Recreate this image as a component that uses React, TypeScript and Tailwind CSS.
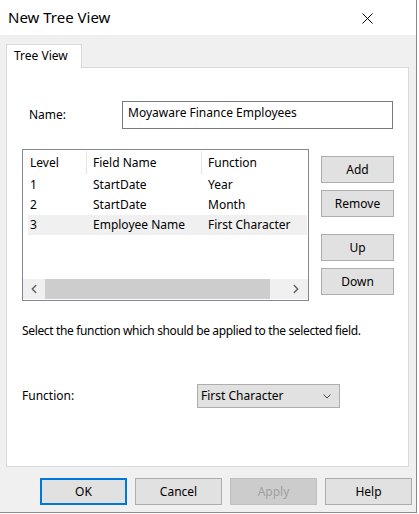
import { ChevronLeft, ChevronRight } from 'lucide-react';

const rows = [
    { level: '1', field: 'StartDate', fn: 'Year' },
    { level: '2', field: 'StartDate', fn: 'Month' },
    { level: '3', field: 'Employee Name', fn: 'First Character' },
];

const SELECTED = 2;

const SideButton = ({ label, className = '' }: { label: string; className?: string }) => (
    <button className={`w-[73px] h-[27px] bg-[#e1e1e1] border border-[#adadad] text-[12px] text-black leading-none ${className}`}>
        {label}
    </button>
);

const DialogButton = ({ label, variant = 'normal' }: { label: string; variant?: 'normal' | 'default' | 'disabled' }) => {
    const styles = {
        normal: 'border border-[#adadad] bg-[#e1e1e1] text-black',
        default: 'border-2 border-[#0078d7] bg-[#e1e1e1] text-black',
        disabled: 'border border-[#bfbfbf] bg-[#cccccc] text-[#a0a0a0]',
    };
    return (
        <button className={`w-[87px] h-[27px] text-[12px] leading-none ${styles[variant]}`}>
            {label}
        </button>
    );
};

const App = () => {
    return (
        <div className="w-[419px] h-[514px] bg-white font-['Segoe_UI','Noto_Sans',sans-serif] text-[12px] text-black">
            <div className="w-[417px] h-[513px] flex flex-col border-r border-b border-[#8a8a8a]">
                {/* title bar */}
                <div className="h-[35px] flex items-center justify-between bg-white pl-[8px] pr-[43px] shrink-0">
                    <span className="text-[15px] leading-none">New Tree View</span>
                    <svg width="11" height="11" viewBox="0 0 11 11" className="mt-[1px]">
                        <path d="M0.5 0.5 L10.5 10.5 M10.5 0.5 L0.5 10.5" stroke="#000" strokeWidth="1" />
                    </svg>
                </div>

                <div className="flex-1 bg-[#f0f0f0] pt-[9px] pl-[6px] flex flex-col">
                    {/* tab strip */}
                    <div className="flex">
                        <div className="w-[76px] h-[24px] bg-white border border-b-0 border-[#d9d9d9] pl-[7px] pt-[4px] -mb-px relative z-10 leading-[14px]">
                            Tree View
                        </div>
                    </div>

                    {/* tab page */}
                    <div className="w-[403px] h-[400px] bg-white border border-[#d9d9d9] flex flex-col">
                        <div className="flex items-center mt-[33px]">
                            <span className="w-[115px] pl-[22px] shrink-0">Name:</span>
                            <div className="w-[271px] h-[28px] border border-[#7a7a7a] px-[5px] pt-[3px] leading-[16px]">
                                Moyaware Finance Employees
                            </div>
                        </div>

                        <div className="flex mt-[20px]">
                            {/* list view */}
                            <div className="ml-[15px] w-[287px] h-[152px] border border-[#828790] flex flex-col">
                                <div className="h-[25px] flex items-center shrink-0">
                                    <div className="w-[64px] h-[23px] flex items-center pl-[7px] border-r border-[#e5e5e5]">Level</div>
                                    <div className="w-[115px] h-[23px] flex items-center pl-[6px] border-r border-[#e5e5e5]">Field Name</div>
                                    <div className="flex-1 h-[23px] flex items-center pl-[6px]">Function</div>
                                </div>
                                <div className="flex-1">
                                    {rows.map((r, i) => (
                                        <div
                                            key={r.level}
                                            className={`ml-[5px] w-[279px] h-[20px] flex items-center ${i === SELECTED ? 'bg-[#f0f0f0]' : ''}`}
                                        >
                                            <span className="w-[65px] pl-[2px]">{r.level}</span>
                                            <span className="w-[115px]">{r.field}</span>
                                            <span className="whitespace-nowrap">{r.fn}</span>
                                        </div>
                                    ))}
                                </div>
                                {/* horizontal scrollbar */}
                                <div className="h-[20px] mb-[1px] flex bg-[#f0f0f0] shrink-0">
                                    <div className="w-[22px] flex items-center justify-center text-[#606060]">
                                        <ChevronLeft size={14} strokeWidth={2.5} />
                                    </div>
                                    <div className="w-[225px] bg-[#cdcdcd]" />
                                    <div className="flex-1 flex items-center justify-end pr-[5px] text-[#606060]">
                                        <ChevronRight size={14} strokeWidth={2.5} />
                                    </div>
                                </div>
                            </div>

                            <div className="ml-[12px] pt-[7px] flex flex-col">
                                <SideButton label="Add" />
                                <SideButton label="Remove" className="mt-[7px]" />
                                <SideButton label="Up" className="mt-[17px]" />
                                <SideButton label="Down" className="mt-[7px]" />
                            </div>
                        </div>

                        <p className="mt-[22px] pl-[15px] leading-[16px] tracking-[-0.35px] whitespace-nowrap">
                            Select the function which should be applied to the selected field.
                        </p>

                        <div className="flex items-center mt-[45px]">
                            <span className="w-[190px] pl-[15px] shrink-0">Function:</span>
                            <div className="w-[143px] h-[24px] bg-[#e1e1e1] border border-[#adadad] flex items-center justify-between pl-[3px] pr-[8px]">
                                <span>First Character</span>
                                <svg width="8" height="5" viewBox="0 0 8 5">
                                    <path d="M0.5 0.5 L4 4 L7.5 0.5" fill="none" stroke="#444" strokeWidth="1" />
                                </svg>
                            </div>
                        </div>
                    </div>

                    {/* dialog buttons */}
                    <div className="flex gap-[8px] pl-[34px] mt-[11px]">
                        <DialogButton label="OK" variant="default" />
                        <DialogButton label="Cancel" />
                        <DialogButton label="Apply" variant="disabled" />
                        <DialogButton label="Help" />
                    </div>
                </div>
            </div>
        </div>
    );
};

export default App;
